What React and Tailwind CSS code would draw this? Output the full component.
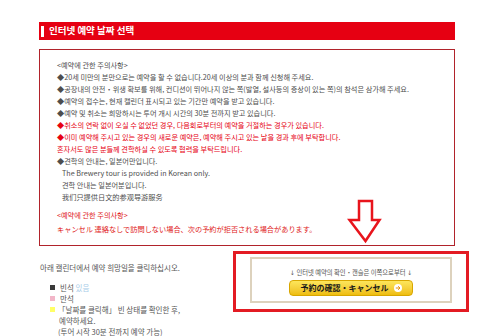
export default function App() {
  const ko = { fontFamily: '"Noto Sans CJK KR", "Noto Sans CJK JP", sans-serif' };
  return (
    <div className="relative w-[500px] h-[336px] bg-white overflow-hidden pl-[39px] pt-[22px]" style={ko}>
      <div className="w-[416px] h-[18px] bg-[#e60012] flex items-center pl-[2px]">
        <div className="w-[3px] h-[11px] bg-white" />
        <span className="ml-[5px] text-white font-bold text-[9.5px] leading-none">인터넷 예약 날짜 선택</span>
      </div>

      <div className="mt-[9px] w-[416px] border border-[#b1232b] pt-[9px] pb-[9px] pl-[17px] text-[7.2px] leading-[12px] text-[#4d4d4d] whitespace-nowrap">
        <div>&lt;예약에 관한 주의사항&gt;</div>
        <div>◆20세 미만의 분만으로는 예약을 할 수 없습니다.20세 이상의 분과 함께 신청해 주세요.</div>
        <div>◆공장내의 안전・위생 확보를 위해, 컨디션이 뛰어나지 않는 쪽(발열, 설사등의 증상이 있는 쪽)의 참석은 삼가해 주세요.</div>
        <div>◆예약의 접수는, 현재 캘린더 표시되고 있는 기간만 예약을 받고 있습니다.</div>
        <div>◆예약 및 취소는 희망하시는 투어 개시 시간의 30분 전까지 받고 있습니다.</div>
        <div className="text-[#e60012]">◆취소의 연락 없이 오실 수 없었던 경우, 다음회로부터의 예약을 거절하는 경우가 있습니다.</div>
        <div className="text-[#e60012]">◆이미 예약해 주시고 있는 경우의 새로운 예약은, 예약해 주시고 있는 날을 경과 후에 부탁합니다.</div>
        <div className="text-[#e60012]">혼자서도 많은 분들께 견학하실 수 있도록 협력을 부탁드립니다.</div>
        <div>◆견학의 안내는, 일본어만입니다.</div>
        <div className="pl-[5px]">The Brewery tour is provided in Korean only.</div>
        <div className="pl-[5px]">견학 안내는 일본어분입니다.</div>
        <div className="pl-[5px]" style={{ fontFamily: '"Noto Sans CJK SC", sans-serif' }}>我们只提供日文的参观导游服务</div>
        <div className="mt-[5px] leading-[14px] text-[#e02020]">
          <div>&lt;예약에 관한 주의사항&gt;</div>
          <div style={{ fontFamily: '"Noto Sans CJK JP", sans-serif' }}>キャンセル 連絡なしで訪問しない場合、次の予約が拒否される場合があります。</div>
        </div>
      </div>

      <div className="mt-[5px] w-[430px] flex justify-between">
        <div className="pt-[11px] pl-[1px] text-[7.5px] leading-[11px] text-[#555] whitespace-nowrap">
          <div>아래 캘린더에서 예약 희망일을 클릭하십시오.</div>
          <div className="mt-[9px] pl-[10px]">
            <div className="flex items-center">
              <span className="w-[5px] h-[5px] bg-[#3a3a3a] mr-[5px]" />
              <span>빈석 <span className="text-[#a8cce8]">있음</span></span>
            </div>
            <div className="flex items-center">
              <span className="w-[5px] h-[5px] bg-[#f2b6c8] mr-[5px]" />
              <span>만석</span>
            </div>
            <div className="flex items-center">
              <span className="w-[5px] h-[5px] bg-[#ffff66] mr-[3px]" />
              <span>「날짜를 클릭해」 빈 상태를 확인한 후,</span>
            </div>
            <div className="pl-[9px]">예약하세요.</div>
            <div className="pl-[8px]">(투어 시작 30분 전까지 예약 가능)</div>
          </div>
        </div>

        <div className="w-[236px] h-[61px] border-[3px] border-[#e31b23] pt-[3px]">
          <div className="w-[202px] h-[46px] mx-auto border-2 border-[#ddd2bd] flex flex-col items-center">
            <div className="mt-[9px] text-[6.3px] leading-[10px] text-[#555] whitespace-nowrap">
              <span style={{ fontFamily: '"DejaVu Sans", sans-serif' }}>↓</span> 인터넷 예약의 확인・캔슬은 이쪽으로부터 <span style={{ fontFamily: '"DejaVu Sans", sans-serif' }}>↓</span>
            </div>
            <div className="mt-[2px] w-[124px] h-[16px] rounded-[4px] border border-[#d8a600] bg-gradient-to-b from-[#fde65a] to-[#eebd08] flex items-center justify-center">
              <span className="text-[8px] font-bold text-[#1a1a1a] leading-none" style={{ fontFamily: '"Noto Sans CJK JP", sans-serif' }}>予約の確認・キャンセル</span>
              <span className="ml-[5px] w-[8px] h-[8px] rounded-full bg-white flex items-center justify-center">
                <svg width="6" height="6" viewBox="0 0 6 6">
                  <path d="M0.8 3 H5 M3.2 1.2 L5 3 L3.2 4.8" stroke="#e8900a" strokeWidth="1" fill="none" />
                </svg>
              </span>
            </div>
          </div>
        </div>
      </div>

      <svg className="absolute left-[347px] top-[199px]" width="35" height="45" viewBox="0 0 35 45">
        <polygon points="12,2 25,2 25,21 32.5,21 18.5,42 2.5,21 12,21" fill="white" stroke="#e8141c" strokeWidth="2.5" strokeLinejoin="miter" />
      </svg>
    </div>
  );
}
